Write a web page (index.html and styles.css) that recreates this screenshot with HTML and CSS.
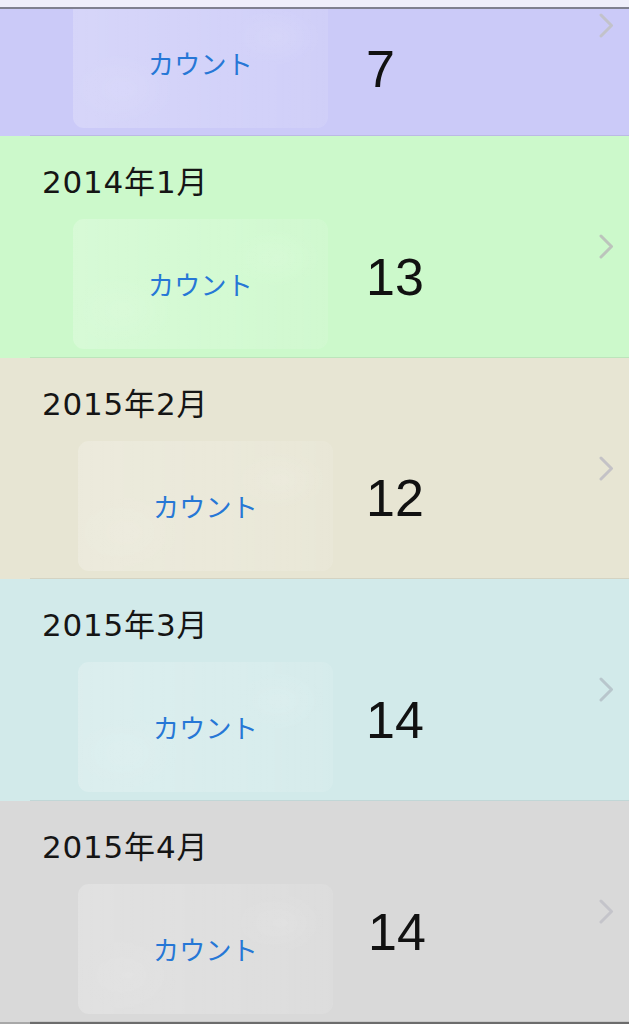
FILE: index.html
```html
<!DOCTYPE html>
<html lang="ja">
<head>
<meta charset="utf-8">
<title>カウント一覧</title>
<link rel="stylesheet" href="styles.css">
</head>
<body>
<div class="screen">
  <div class="topbar"></div>
  <div class="list">
    <div class="rows">
      <div class="row row--lavender">
        <div class="main">
          <div class="title title--hidden" aria-hidden="true">&nbsp;</div>
          <div class="content">
            <div class="card"><span class="count">カウント</span></div>
            <div class="num num--down">7</div>
          </div>
        </div>
        <svg class="chev" width="15" height="25" viewBox="0 0 15 25"><polyline points="2,2 12.5,12.5 2,23" fill="none" stroke="#c2c2ca" stroke-width="3" stroke-linecap="round" stroke-linejoin="round"/></svg>
      </div>
      <div class="row row--green">
        <div class="main">
          <div class="title">2014年1月</div>
          <div class="content">
            <div class="card"><span class="count">カウント</span></div>
            <div class="num">13</div>
          </div>
        </div>
        <svg class="chev" width="15" height="25" viewBox="0 0 15 25"><polyline points="2,2 12.5,12.5 2,23" fill="none" stroke="#bcc4bc" stroke-width="3" stroke-linecap="round" stroke-linejoin="round"/></svg>
      </div>
      <div class="row row--beige">
        <div class="main">
          <div class="title">2015年2月</div>
          <div class="content content--shift">
            <div class="card"><span class="count">カウント</span></div>
            <div class="num">12</div>
          </div>
        </div>
        <svg class="chev" width="15" height="25" viewBox="0 0 15 25"><polyline points="2,2 12.5,12.5 2,23" fill="none" stroke="#c4c2c6" stroke-width="3" stroke-linecap="round" stroke-linejoin="round"/></svg>
      </div>
      <div class="row row--cyan">
        <div class="main">
          <div class="title">2015年3月</div>
          <div class="content content--shift">
            <div class="card"><span class="count">カウント</span></div>
            <div class="num">14</div>
          </div>
        </div>
        <svg class="chev" width="15" height="25" viewBox="0 0 15 25"><polyline points="2,2 12.5,12.5 2,23" fill="none" stroke="#b8c6cc" stroke-width="3" stroke-linecap="round" stroke-linejoin="round"/></svg>
      </div>
      <div class="row row--grey">
        <div class="main">
          <div class="title">2015年4月</div>
          <div class="content content--shift">
            <div class="card"><span class="count">カウント</span></div>
            <div class="num num--up num--right">14</div>
          </div>
        </div>
        <svg class="chev" width="15" height="25" viewBox="0 0 15 25"><polyline points="2,2 12.5,12.5 2,23" fill="none" stroke="#c4c4ca" stroke-width="3" stroke-linecap="round" stroke-linejoin="round"/></svg>
      </div>
    </div>
  </div>
  <div class="bottombar"></div>
</div>
</body>
</html>
```

FILE: styles.css
```css
html, body {
  margin: 0;
  padding: 0;
}

body {
  width: 629px;
  height: 1024px;
  overflow: hidden;
  background: #efeefa;
  font-family: "DejaVu Sans", "Noto Sans CJK JP", sans-serif;
}

.screen {
  display: flex;
  flex-direction: column;
  height: 1024px;
}

.topbar {
  height: 7px;
  background: #efeefa;
  border-bottom: 2px solid #80808f;
  flex: none;
}

.list {
  height: 1013px;
  overflow: hidden;
  flex: none;
}

.rows {
  display: flex;
  flex-direction: column;
  margin-top: -94.5px;
}

.row {
  height: 221.5px;
  flex: none;
  display: flex;
  align-items: center;
  box-sizing: border-box;
  position: relative;
}

.row::after {
  content: "";
  position: absolute;
  left: 30px;
  right: 0;
  bottom: 0;
  height: 1px;
  background: rgba(0, 0, 0, 0.08);
}

.row--lavender { background: #cbcaf8; }
.row--green    { background: #ccf9cb; }
.row--beige    { background: #e7e5d3; }
.row--cyan     { background: #d2eaea; }
.row--grey     { background: #d9d9d9; }

.main {
  flex: 1;
  align-self: stretch;
  display: flex;
  flex-direction: column;
  padding-top: 28px;
}

.title {
  padding-left: 42px;
  font-family: "DejaVu Sans", "Noto Sans CJK JP", sans-serif;
  font-size: 31px;
  line-height: 36px;
  height: 36px;
  color: #151515;
  letter-spacing: 0.8px;
}

.title--hidden {
  visibility: hidden;
}

.content {
  display: flex;
  align-items: center;
  margin-top: 19px;
  padding-left: 73px;
}

.content--shift {
  padding-left: 78px;
}

.card {
  width: 255px;
  height: 130px;
  border-radius: 11px;
  flex: none;
  display: flex;
  align-items: center;
  justify-content: center;
  background:
    radial-gradient(ellipse 60px 40px at 80% 30%, rgba(255,255,255,0.10), rgba(255,255,255,0) 70%),
    radial-gradient(ellipse 70px 50px at 20% 70%, rgba(255,255,255,0.08), rgba(255,255,255,0) 70%),
    linear-gradient(90deg, rgba(255,255,255,0.22) 0%, rgba(255,255,255,0.16) 60%, rgba(255,255,255,0.10) 100%);
}

.count {
  font-family: "Noto Sans CJK JP", sans-serif;
  font-size: 26px;
  line-height: 1;
  color: #2677d6;
  letter-spacing: 0.3px;
}

.num {
  font-family: "Liberation Sans", "Noto Sans", sans-serif;
  font-size: 52px;
  line-height: 1;
  color: #111;
  margin-left: 38px;
  margin-bottom: 15px;
}

.content--shift .num {
  margin-left: 33px;
}

.num--down {
  margin-bottom: 0;
  margin-top: 13px;
}

.content--shift .num--up {
  margin-bottom: 34px;
}

.content--shift .num--right {
  margin-left: 35px;
}

.chev {
  flex: none;
  margin-right: 15px;
  margin-left: 8px;
}

.bottombar {
  height: 2px;
  flex: none;
  background: linear-gradient(90deg, #a8a8a8 0, #a8a8a8 30px, #6c6c6c 30px);
}
```
